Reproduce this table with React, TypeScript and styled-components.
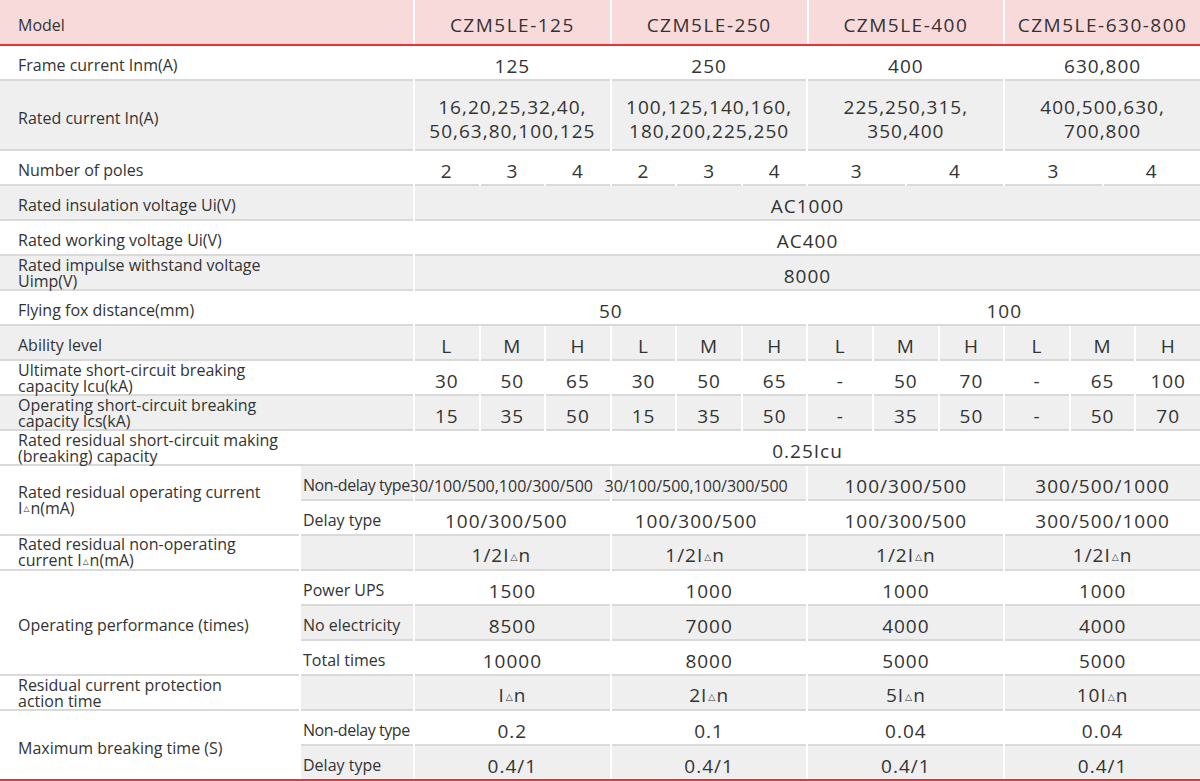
import React from "react";
import styled, { createGlobalStyle, css } from "styled-components";

const GlobalStyle = createGlobalStyle`
  html, body { margin: 0; padding: 0; background: #fff; }
  body {
    font-family: "Open Sans", "Noto Sans", "Liberation Sans", sans-serif;
    color: #333;
  }
`;

const COLS = "299px 112px repeat(24, minmax(0, 1fr))";
const LINE = "#d9d9d9";
const SHADE = "#efefef";
const RED = "#e2363c";

const Table = styled.div`
  width: 1200px;
  overflow: hidden;
`;

const HeadRow = styled.div`
  display: grid;
  grid-template-columns: ${COLS};
  column-gap: 2px;
  height: 44px;
  border-bottom: 2px solid ${RED};
  background: #fff;
`;

const HeadCell = styled.div<{ $span: number; $first?: boolean }>`
  grid-column: span ${(p) => p.$span};
  background: #f9dadb;
  display: flex;
  align-items: center;
  box-sizing: border-box;
  padding-top: 5px;
  justify-content: ${(p) => (p.$first ? "flex-start" : "center")};
  padding-left: ${(p) => (p.$first ? "18px" : "0")};
  font-size: ${(p) => (p.$first ? "16px" : "19px")};
  letter-spacing: ${(p) => (p.$first ? "0" : "1.5px")};
  white-space: nowrap;
`;

const Body = styled.div`
  display: grid;
  grid-template-columns: ${COLS};
  grid-template-rows: repeat(20, 35px) 33px;
  column-gap: 2px;
  border-bottom: 2px solid ${RED};
  background: #fff;
`;

type CellProps = {
  $span?: number;
  $rows?: number;
  $shade?: boolean;
  $last?: boolean;
};

const cellBase = css<CellProps>`
  grid-column: span ${(p) => p.$span ?? 1};
  grid-row: span ${(p) => p.$rows ?? 1};
  background: ${(p) => (p.$shade ? SHADE : "#fff")};
  border-bottom: ${(p) => (p.$last ? "none" : `2px solid ${LINE}`)};
  box-sizing: border-box;
  display: flex;
  align-items: center;
  min-width: 0;
`;

const LabelBox = styled.div<CellProps & { $two?: boolean }>`
  ${cellBase};
  padding: ${(p) => (p.$two ? "1px" : "5px")} 0 0 18px;
  font-size: 16px;
  line-height: 16px;
`;

const SubLabel = styled.div<CellProps & { $tight?: boolean }>`
  ${cellBase};
  padding: 4px 0 0 2px;
  font-size: 16px;
  letter-spacing: ${(p) => (p.$tight ? "-0.45px" : "0")};
  white-space: nowrap;
  overflow: visible;
`;

const ValueBox = styled.div<CellProps & { $small?: boolean; $nudge?: number }>`
  ${cellBase};
  justify-content: center;
  text-align: center;
  padding-top: 7px;
  padding-right: ${(p) => (p.$nudge ? `${p.$nudge}px` : "0")};
  font-size: ${(p) => (p.$small ? "16px" : "19px")};
  letter-spacing: ${(p) => (p.$small ? "0" : "1px")};
  line-height: 24px;
  white-space: nowrap;
`;

const Text = styled.span`
  display: block;
`;

const Tri = styled.span`
  font-family: "DejaVu Sans", sans-serif;
  font-size: 0.48em;
  letter-spacing: 0;
  vertical-align: 0.3em;
  margin: 0 1px;
`;

type LabelProps = CellProps & { children?: React.ReactNode; $two?: boolean };
const Label = ({ children, ...rest }: LabelProps) => (
  <LabelBox {...rest}>
    <Text>{children}</Text>
  </LabelBox>
);

type ValueProps = CellProps & { children?: React.ReactNode; $small?: boolean; $nudge?: number };
const Value = ({ children, ...rest }: ValueProps) => (
  <ValueBox {...rest}>
    <Text>{children}</Text>
  </ValueBox>
);

const Delta = () => <Tri>△</Tri>;

const models = ["CZM5LE-125", "CZM5LE-250", "CZM5LE-400", "CZM5LE-630-800"];

const groups = (
  vals: React.ReactNode[],
  opts: { shade?: boolean; last?: boolean; rows?: number; nudges?: number[] } = {}
) =>
  vals.map((v, i) => (
    <Value
      key={i}
      $span={6}
      $rows={opts.rows}
      $shade={opts.shade}
      $last={opts.last}
      $nudge={opts.nudges?.[i]}
    >
      {v}
    </Value>
  ));

const subs = (vals: string[], shade?: boolean) =>
  vals.map((v, i) => (
    <Value key={i} $span={2} $shade={shade}>
      {v}
    </Value>
  ));

export default function App() {
  return (
    <>
      <GlobalStyle />
      <Table>
        <HeadRow>
          <HeadCell $span={2} $first>
            Model
          </HeadCell>
          {models.map((m) => (
            <HeadCell key={m} $span={6}>
              {m}
            </HeadCell>
          ))}
        </HeadRow>

        <Body>
          <Label $span={2}>Frame current Inm(A)</Label>
          {groups(["125", "250", "400", "630,800"])}

          <Label $span={2} $rows={2} $shade>
            Rated current In(A)
          </Label>
          {groups(
            [
              <>16,20,25,32,40,<br />50,63,80,100,125</>,
              <>100,125,140,160,<br />180,200,225,250</>,
              <>225,250,315,<br />350,400</>,
              <>400,500,630,<br />700,800</>,
            ],
            { shade: true, rows: 2 }
          )}

          <Label $span={2}>Number of poles</Label>
          {subs(["2", "3", "4", "2", "3", "4"])}
          <Value $span={3}>3</Value>
          <Value $span={3}>4</Value>
          <Value $span={3}>3</Value>
          <Value $span={3}>4</Value>

          <Label $span={2} $shade>
            Rated insulation voltage Ui(V)
          </Label>
          <Value $span={24} $shade>
            AC1000
          </Value>

          <Label $span={2}>Rated working voltage Ui(V)</Label>
          <Value $span={24}>AC400</Value>

          <Label $span={2} $shade $two>
            Rated impulse withstand voltage
            <br />
            Uimp(V)
          </Label>
          <Value $span={24} $shade>
            8000
          </Value>

          <Label $span={2}>Flying fox distance(mm)</Label>
          <Value $span={12}>50</Value>
          <Value $span={12}>100</Value>

          <Label $span={2} $shade>
            Ability level
          </Label>
          {subs(["L", "M", "H", "L", "M", "H", "L", "M", "H", "L", "M", "H"], true)}

          <Label $span={2} $two>
            Ultimate short-circuit breaking
            <br />
            capacity Icu(kA)
          </Label>
          {subs(["30", "50", "65", "30", "50", "65", "-", "50", "70", "-", "65", "100"])}

          <Label $span={2} $shade $two>
            Operating short-circuit breaking
            <br />
            capacity Ics(kA)
          </Label>
          {subs(["15", "35", "50", "15", "35", "50", "-", "35", "50", "-", "50", "70"], true)}

          <Label $span={2} $two>
            Rated residual short-circuit making
            <br />
            (breaking) capacity
          </Label>
          <Value $span={24}>0.25Icu</Value>

          <Label $rows={2} $two>
            Rated residual operating current
            <br />
            I<Delta />n(mA)
          </Label>
          <SubLabel $shade $tight>
            Non-delay type
          </SubLabel>
          <Value $span={6} $shade $small $nudge={22}>
            30/100/500,100/300/500
          </Value>
          <Value $span={6} $shade $small $nudge={26}>
            30/100/500,100/300/500
          </Value>
          <Value $span={6} $shade>
            100/300/500
          </Value>
          <Value $span={6} $shade>
            300/500/1000
          </Value>
          <SubLabel>Delay type</SubLabel>
          {groups(["100/300/500", "100/300/500", "100/300/500", "300/500/1000"], {
            nudges: [12, 26],
          })}

          <Label $two>
            Rated residual non-operating
            <br />
            current I<Delta />n(mA)
          </Label>
          <SubLabel $shade />
          {groups(
            [0, 1, 2, 3].map((i) => (
              <React.Fragment key={i}>
                1/2I<Delta />n
              </React.Fragment>
            )),
            { shade: true, nudges: [22, 28] }
          )}

          <Label $rows={3}>Operating performance (times)</Label>
          <SubLabel>Power UPS</SubLabel>
          {groups(["1500", "1000", "1000", "1000"])}
          <SubLabel $shade>No electricity</SubLabel>
          {groups(["8500", "7000", "4000", "4000"], { shade: true })}
          <SubLabel>Total times</SubLabel>
          {groups(["10000", "8000", "5000", "5000"])}

          <Label $two>
            Residual current protection
            <br />
            action time
          </Label>
          <SubLabel $shade />
          {groups(
            ["", "2", "5", "10"].map((p) => (
              <React.Fragment key={p}>
                {p}I<Delta />n
              </React.Fragment>
            )),
            { shade: true }
          )}

          <Label $rows={2} $last>
            Maximum breaking time (S)
          </Label>
          <SubLabel $tight>Non-delay type</SubLabel>
          {groups(["0.2", "0.1", "0.04", "0.04"])}
          <SubLabel $shade $last>
            Delay type
          </SubLabel>
          {groups(["0.4/1", "0.4/1", "0.4/1", "0.4/1"], { shade: true, last: true })}
        </Body>
      </Table>
    </>
  );
}
